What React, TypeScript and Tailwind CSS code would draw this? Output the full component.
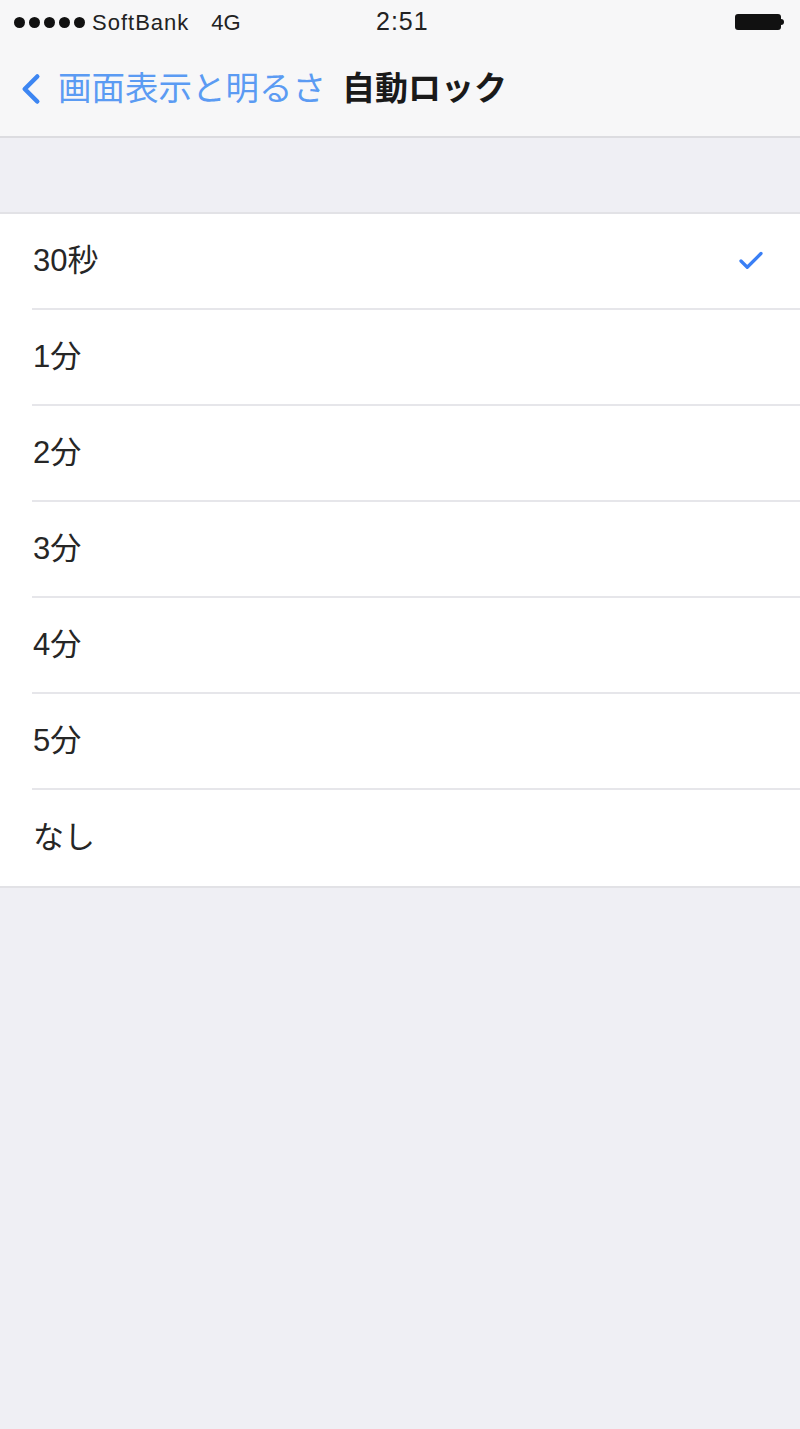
import { Check, ChevronLeft } from "lucide-react";

const options = ["30秒", "1分", "2分", "3分", "4分", "5分", "なし"];
const font = { fontFamily: '"Liberation Sans", "Noto Sans CJK JP", sans-serif' };

export default function App() {
  return (
    <div className="min-h-[1429px] w-[800px] bg-[#efeff4]" style={font}>
      {/* status bar + nav */}
      <div className="bg-[#f7f7f8] border-b-2 border-[#dcdce0]">
        <div className="relative flex h-[44px] items-center px-[14px] text-[22px] text-[#222]">
          <div className="flex gap-[4px]">
            {[0, 1, 2, 3, 4].map((d) => (
              <div key={d} className="h-[11px] w-[11px] rounded-full bg-[#111]" />
            ))}
          </div>
          <span className="ml-[7px] tracking-[1px]">SoftBank</span>
          <span className="ml-[22px]">4G</span>
          <span className="absolute left-[376px] text-[25px] tracking-[1px]">2:51</span>
          <div className="ml-auto mr-[2px] flex items-center">
            <div className="h-[16px] w-[46px] rounded-[3px] bg-[#111]" />
            <div className="h-[6px] w-[3px] rounded-r-sm bg-[#111]" />
          </div>
        </div>
        <div className="flex h-[92px] items-center pb-[2px]">
          <ChevronLeft className="ml-[6px] h-[50px] w-[50px] text-[#3d86f2]" strokeWidth={2.2} />
          <span className="ml-[2px] text-[33.5px] text-[#5b9bf3]">画面表示と明るさ</span>
          <span className="ml-[16px] text-[33px] font-bold text-[#1a1a1a]">自動ロック</span>
        </div>
      </div>

      <div className="h-[76px] border-b-2 border-[#e2e2e6]" />

      <div className="border-b-2 border-[#e2e2e6] bg-white">
        {options.map((label, i) => (
          <div key={label} className="pl-[32px]">
            <div
              className={
                "flex h-[96px] items-center pr-[34px] " +
                (i < options.length - 1 ? "border-b-2 border-[#e6e6ea]" : "")
              }
            >
              <span className="pl-[1px] text-[31px] text-[#262626]">{label}</span>
              {i === 0 && (
                <Check className="ml-auto h-[30px] w-[30px] text-[#3a7ff5]" strokeWidth={2.6} />
              )}
            </div>
          </div>
        ))}
      </div>
    </div>
  );
}
